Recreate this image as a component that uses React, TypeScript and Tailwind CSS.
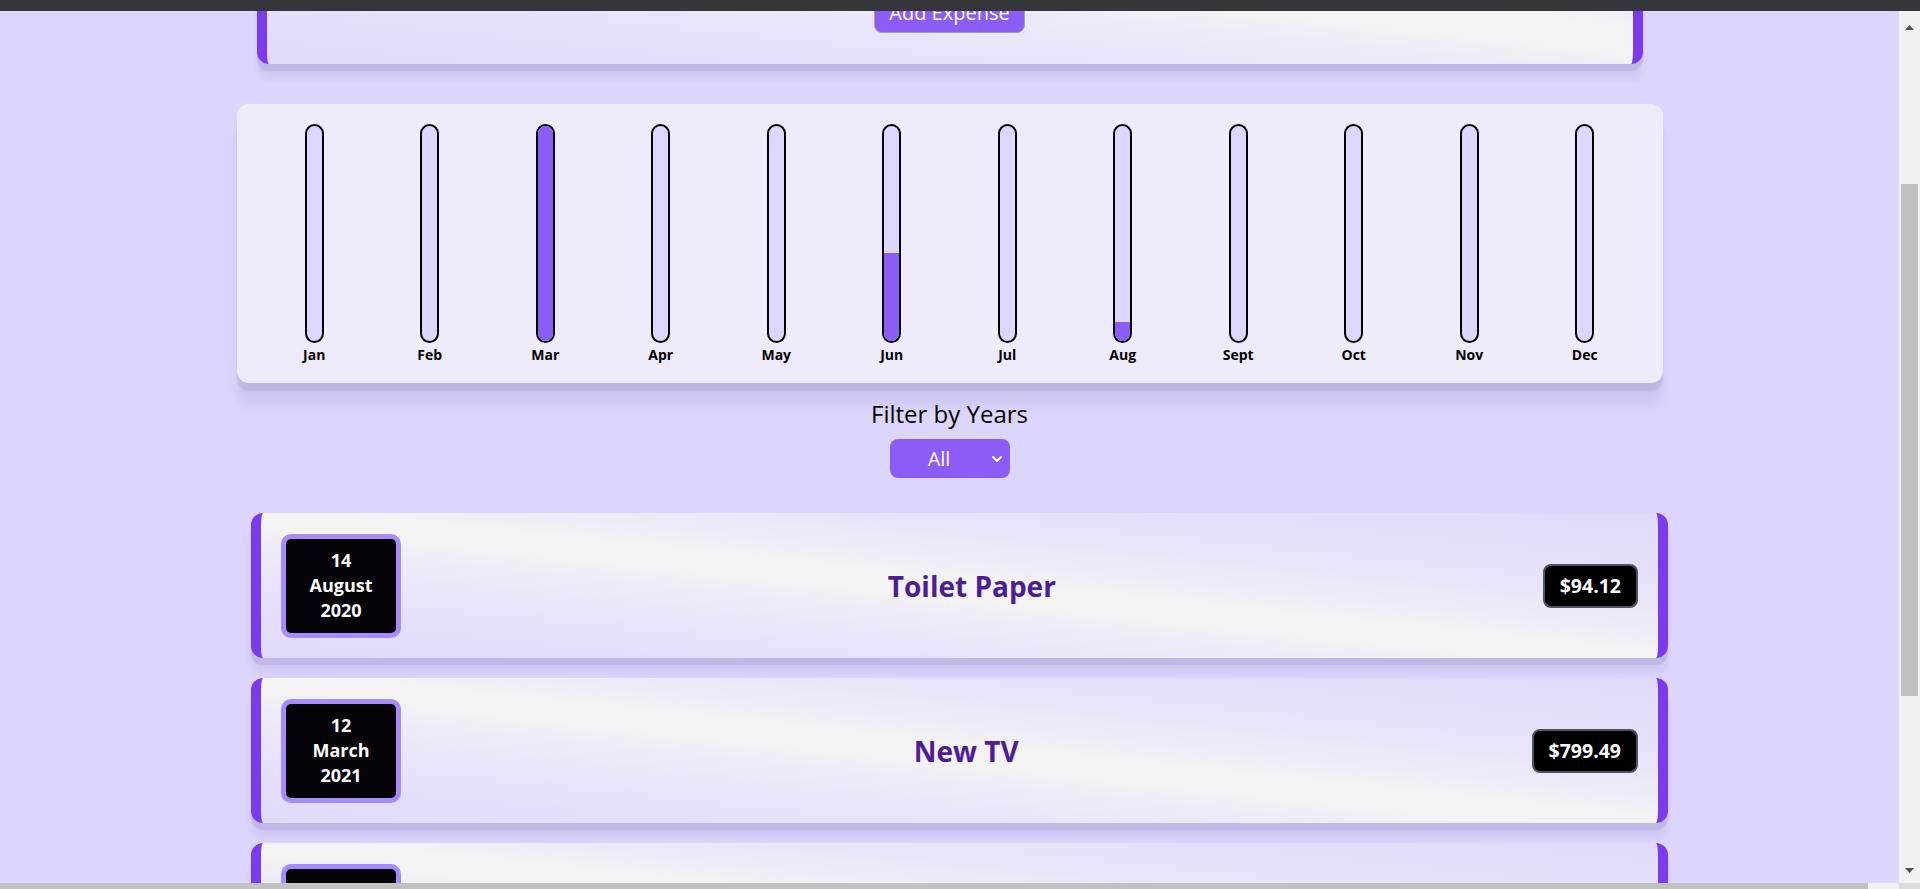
import { ChevronDown } from 'lucide-react';

const months = [
    { label: 'Jan', value: 0 },
    { label: 'Feb', value: 0 },
    { label: 'Mar', value: 1094.16 },
    { label: 'Apr', value: 0 },
    { label: 'May', value: 0 },
    { label: 'Jun', value: 450 },
    { label: 'Jul', value: 0 },
    { label: 'Aug', value: 94.12 },
    { label: 'Sept', value: 0 },
    { label: 'Oct', value: 0 },
    { label: 'Nov', value: 0 },
    { label: 'Dec', value: 0 },
];

const expenses = [
    { id: 'e1', day: '14', month: 'August', year: '2020', title: 'Toilet Paper', amount: '$94.12' },
    { id: 'e2', day: '12', month: 'March', year: '2021', title: 'New TV', amount: '$799.49' },
    { id: 'e3', day: '28', month: 'March', year: '2021', title: 'Car Insurance', amount: '$294.67' },
];

const cardBg =
    'bg-[linear-gradient(186deg,#e1d9fb_0%,#e5dffa_18%,#eae6f9_32%,#efedf7_42%,#f3f3f3_48%,#f3f3f3_54%,#eeebf8_62%,#e9e4fa_74%,#e4ddfb_88%,#e1d9fb_100%)]';

const ChartBar = ({ label, value, max }: { label: string; value: number; max: number }) => {
    const pct = max > 0 ? Math.round((value / max) * 100) : 0;
    return (
        <div className="flex flex-col items-center">
            <div className="h-[219px] w-[19px] rounded-full border-2 border-black bg-[#ddd6fe] overflow-hidden flex flex-col justify-end">
                <div className="w-full bg-[#8b5cf6]" style={{ height: `${pct}%` }} />
            </div>
            <span className="mt-[3px] text-[14px] leading-[18px] font-bold text-black">{label}</span>
        </div>
    );
};

const ExpenseItem = ({ day, month, year, title, amount }: (typeof expenses)[number]) => (
    <li
        className={`h-[145px] shrink-0 flex items-center px-[20px] rounded-[12px] border-x-[10px] border-[#7c3aed] ${cardBg} shadow-[0_7px_1px_rgba(60,40,120,0.1),0_15px_6px_rgba(60,40,120,0.07)]`}
    >
        <div className="w-[120px] h-[104px] shrink-0 rounded-[10px] border-[5px] border-[#a78bfa] bg-[#050208] flex flex-col items-center justify-center text-white font-bold text-[18px] leading-[25px]">
            <span>{day}</span>
            <span>{month}</span>
            <span>{year}</span>
        </div>
        <h2 className="flex-1 text-center text-[28px] font-bold text-[#4c1d95]">{title}</h2>
        <div className="shrink-0 rounded-[8px] border-2 border-[#4b5563] bg-black px-[15px] py-[8px] text-[19.5px] leading-[24px] font-bold text-white">
            {amount}
        </div>
    </li>
);

const Scrollbar = () => (
    <div className="w-[21px] shrink-0 bg-[#f1f1f1] flex flex-col items-center">
        <div className="h-[32px] flex items-center justify-center">
            <svg width="9" height="5" viewBox="0 0 9 5">
                <polygon points="0,5 4.5,0 9,5" fill="#505050" />
            </svg>
        </div>
        <div className="h-[141px]" />
        <div className="h-[512px] w-[17px] bg-[#c1c1c1]" />
        <div className="flex-1" />
        <div className="h-[26px] flex items-center justify-center">
            <svg width="9" height="5" viewBox="0 0 9 5">
                <polygon points="0,0 4.5,5 9,0" fill="#505050" />
            </svg>
        </div>
    </div>
);

export default function App() {
    const max = Math.max(...months.map((m) => m.value));

    return (
        <div className="h-screen w-full overflow-hidden flex flex-col bg-[#dcd5fc] font-['Open_Sans','Noto_Sans',sans-serif]">
            <div className="h-[11px] shrink-0 bg-[#35363a]" />

            <div className="flex flex-1 min-h-0">
                <main className="flex-1 min-w-0 overflow-hidden">
                    {/* new expense form, mostly scrolled away */}
                    <div
                        className={`mx-auto -mt-[147px] w-[1386px] h-[200px] flex flex-col justify-end items-center pb-[31px] rounded-[12px] border-x-[10px] border-[#7c3aed] ${cardBg} shadow-[0_7px_1px_rgba(60,40,120,0.1),0_15px_6px_rgba(60,40,120,0.07)]`}
                    >
                        <button className="rounded-[8px] border border-[#9ca3af] bg-[#8b5cf6] px-[14px] pt-[10px] pb-[6px] text-[20px] leading-[27px] text-white">
                            Add Expense
                        </button>
                    </div>

                    <div className="mx-auto mt-[40px] w-[1426px] h-[279px] rounded-[12px] bg-[#eeecfb] px-5 pt-5 grid grid-cols-12 shadow-[0_8px_2px_rgba(60,40,120,0.1),0_22px_10px_rgba(60,40,120,0.08)]">
                        {months.map((m) => (
                            <ChartBar key={m.label} label={m.label} value={m.value} max={max} />
                        ))}
                    </div>

                    <div className="mt-[16px] text-center text-[24px] leading-[30px] text-black">Filter by Years</div>
                    <div className="mx-auto mt-[10px] w-[120px] h-[39px] rounded-[8px] bg-[#8b5cf6] flex items-center pr-[5px] text-white">
                        <span className="flex-1 text-center text-[20px]">All</span>
                        <ChevronDown className="w-[16px] h-[16px]" strokeWidth={3} />
                    </div>

                    <ul className="mt-[35px] ml-[251px] w-[1417px] flex flex-col gap-[20px]">
                        {expenses.map((e) => (
                            <ExpenseItem key={e.id} {...e} />
                        ))}
                    </ul>
                </main>

                <Scrollbar />
            </div>

            <div className="h-[6px] shrink-0 flex">
                <div className="w-[1868px] bg-[#c1c1c1]" />
                <div className="flex-1 bg-[#f1f1f1]" />
                <div className="w-[21px] bg-[#dcdcdc]" />
            </div>
        </div>
    );
}
